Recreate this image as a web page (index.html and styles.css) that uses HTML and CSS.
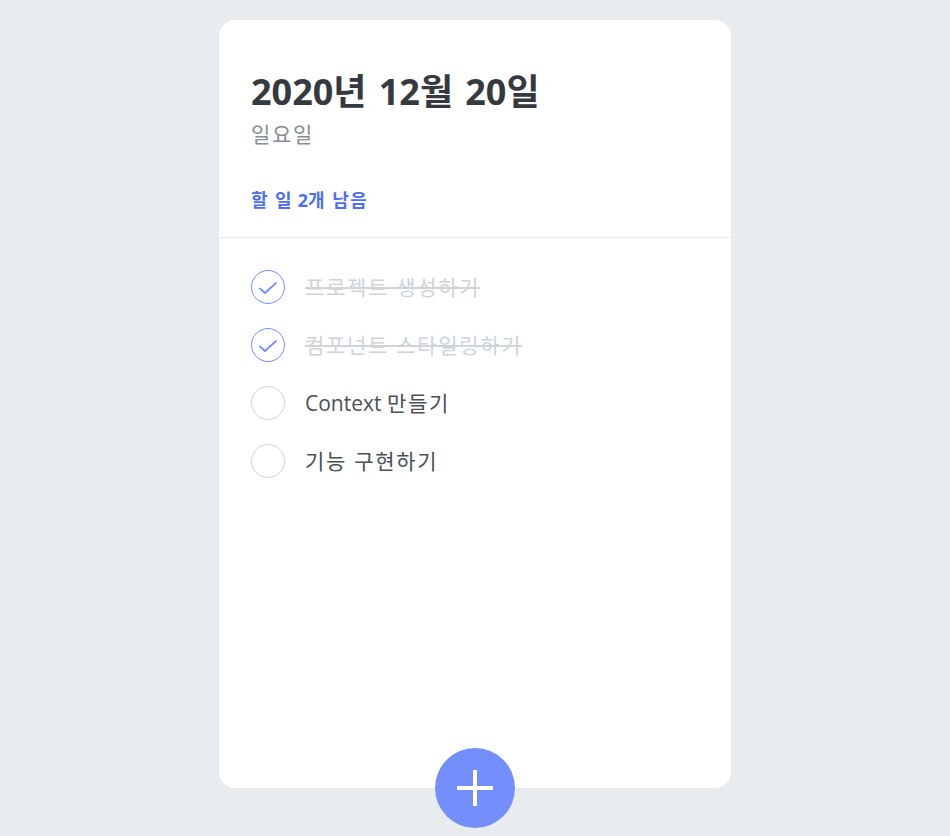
FILE: index.html
```html
<!DOCTYPE html>
<html lang="ko">
<head>
<meta charset="utf-8">
<title>Todo</title>
<link rel="stylesheet" href="styles.css">
</head>
<body>
<div class="template">
  <div class="head">
    <h1 class="date">2020<span class="ko">년</span> 12<span class="ko">월</span> 20<span class="ko">일</span></h1>
    <div class="day ko">일요일</div>
    <div class="tasks-left"><span class="ko">할 일</span> 2<span class="ko">개 남음</span></div>
  </div>
  <div class="list">
    <div class="item">
      <div class="check done"><svg viewBox="0 0 24 24" width="24" height="24"><polyline points="4,13.5 9,18 20,8" fill="none" stroke="currentColor" stroke-width="1.8" stroke-linecap="round" stroke-linejoin="round"/></svg></div>
      <div class="text done ko">프로젝트 생성하기</div>
    </div>
    <div class="item">
      <div class="check done"><svg viewBox="0 0 24 24" width="24" height="24"><polyline points="4,13.5 9,18 20,8" fill="none" stroke="currentColor" stroke-width="1.8" stroke-linecap="round" stroke-linejoin="round"/></svg></div>
      <div class="text done ko">컴포넌트 스타일링하기</div>
    </div>
    <div class="item">
      <div class="check"></div>
      <div class="text">Context <span class="ko">만들기</span></div>
    </div>
    <div class="item">
      <div class="check"></div>
      <div class="text ko">기능 구현하기</div>
    </div>
  </div>
  <button class="create" type="button" aria-label="추가"><svg viewBox="0 0 36 36" width="36" height="36"><rect x="16" y="0" width="4" height="36" fill="#fff"/><rect x="0" y="16" width="36" height="4" fill="#fff"/></svg></button>
</div>
</body>
</html>
```
FILE: styles.css
```css
* { box-sizing: content-box; }
html, body { margin: 0; padding: 0; }
body {
  background: #e9ecef;
  font-family: "Open Sans", "Noto Sans CJK KR", sans-serif;
  padding-top: 20px;
  height: 816px;
  overflow: hidden;
}
.ko { letter-spacing: 0.08em; }
.template {
  width: 512px;
  height: 768px;
  margin: 0 auto;
  background: #fff;
  border-radius: 16px;
  position: relative;
  display: flex;
  flex-direction: column;
}
.head {
  padding: 48px 32px 24px;
  border-bottom: 1px solid #e9ecef;
}
.date {
  margin: 0;
  font-size: 36px;
  line-height: 48px;
  color: #343a40;
  font-weight: 700;
}
.day {
  margin-top: 4px;
  font-size: 21px;
  line-height: 28px;
  color: #868e96;
}
.tasks-left {
  margin-top: 40px;
  font-size: 18px;
  line-height: 25px;
  color: #4c6ef5;
  font-weight: 700;
}
.list {
  flex: 1;
  padding: 20px 32px 48px;
}
.item {
  display: flex;
  align-items: center;
  padding: 12px 0;
}
.check {
  width: 32px;
  height: 32px;
  border-radius: 50%;
  border: 1px solid #ced4da;
  display: flex;
  align-items: center;
  justify-content: center;
  margin-right: 20px;
  flex: none;
}
.check.done {
  border-color: #748ffc;
  color: #748ffc;
}
.check svg { display: block; }
.text {
  font-size: 21px;
  line-height: 28px;
  color: #495057;
}
.text.done {
  color: #ced4da;
  text-decoration: line-through;
}
.create {
  position: absolute;
  left: 50%;
  bottom: 0;
  transform: translate(-50%, 50%);
  width: 80px;
  height: 80px;
  border-radius: 50%;
  border: none;
  padding: 0;
  background: #748ffc;
  display: flex;
  align-items: center;
  justify-content: center;
  cursor: pointer;
}
.create svg { display: block; }
```
